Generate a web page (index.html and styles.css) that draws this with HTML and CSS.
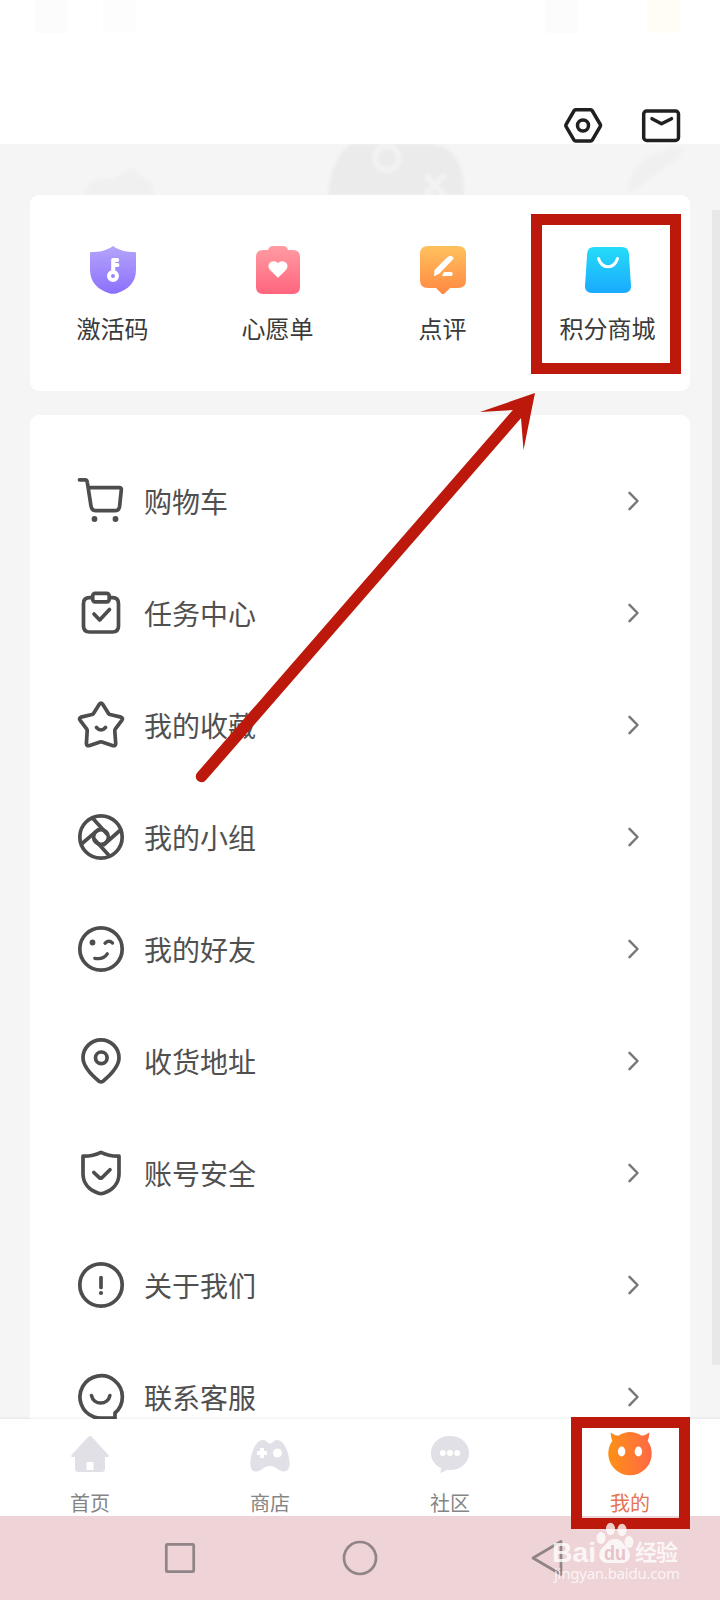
FILE: index.html
```html
<!DOCTYPE html>
<html lang="zh-CN">
<head>
<meta charset="utf-8">
<title>我的</title>
<link rel="stylesheet" href="styles.css">
</head>
<body>
<div class="screen">
  <header class="header">
    <i class="ghost g1"></i><i class="ghost g2"></i><i class="ghost g3"></i><i class="ghost g4"></i>
    <svg class="head-icon" viewBox="0 0 40 40"><path d="M12.500 3.700h15.300a1.500 1.500 0 0 1 1.300.8l8.200 14a1.800 1.800 0 0 1 0 1.800l-8.200 14a1.500 1.500 0 0 1-1.300.8H12.500a1.500 1.500 0 0 1-1.300-.8L3 20.300a1.800 1.800 0 0 1 0-1.800l8.200-14a1.500 1.500 0 0 1 1.300-.8z"/><circle cx="20" cy="19.500" r="5.500"/></svg>
    <svg class="head-icon" viewBox="0 0 40 40"><rect x="2.700" y="5" width="34.800" height="29.500" rx="3"/><path d="M11 12.700l9.500 5 10-5"/></svg>
  </header>
  <main class="content">
    <svg class="backdrop" viewBox="0 0 720 51">
      <path class="dark" d="M328 51C331 25 338 7 352 0h78c20 2 34 12 34 51z"/>
      <circle class="ring" cx="387" cy="14" r="12"/>
      <path class="ring" d="M425 31l20 20M445 31l-20 20"/>
      <path class="soft" d="M84 51c3-10 9-16 16-16h13l18-11 13 10c7 3 10 10 10 17z"/>
      <path class="soft" d="M628 51c0-26 15-43 55-48-2 15-22 21-55 48z"/>
    </svg>
    <section class="shortcuts">
      <div class="shortcut">
        <svg viewBox="0 0 52 52"><defs><linearGradient id="purple" x2="0" y2="1"><stop stop-color="#b5a4fb"/><stop offset="1" stop-color="#8b70fc"/></linearGradient></defs><path fill="url(#purple)" d="M26 2c7 5 14 6 22 6a1 1 0 0 1 1 1v17c0 13-9 20-19 23.200q-4 1.300-8 0C12 46 3 39 3 26V9a1 1 0 0 1 1-1c8 0 15-1 22-6z"/><path d="M26.200 27V16h4M27 21h3.500" stroke="#fff" stroke-width="4" stroke-linecap="round" stroke-linejoin="round" fill="none"/><circle cx="26" cy="32" r="4" stroke="#fff" stroke-width="4" fill="none"/></svg>
        <span>激活码</span>
      </div>
      <div class="shortcut">
        <svg viewBox="0 0 52 52"><defs><linearGradient id="pink" x2="0" y2="1"><stop stop-color="#ff9ca1"/><stop offset="1" stop-color="#ff657d"/></linearGradient></defs><path fill="url(#pink)" d="M16 6q1-4 5-4h10q4 0 5 4h5q7 0 7 7v30q0 7-7 7H11q-7 0-7-7V13q0-7 7-7z"/><path fill="#fff" d="M26 33.800l-7.500-7.300c-6-6 2.500-12.500 7.500-7.200 5-5.300 13.500 1.200 7.500 7.200z"/></svg>
        <span>心愿单</span>
      </div>
      <div class="shortcut">
        <svg viewBox="0 0 52 52"><defs><linearGradient id="orange" x2="0" y2="1"><stop stop-color="#ffc15e"/><stop offset="1" stop-color="#ff8842"/></linearGradient></defs><path fill="url(#orange)" d="M11 2h30q8 0 8 8v26q0 8-8 8h-8l-5.500 5.500q-1.500 1-3 0L19 44h-8q-8 0-8-8V10q0-8 8-8z"/><path fill="#fff" d="M30 13.500q4.500-4 6.800 1L22.500 29.500l-5.500 2.700L17.500 26zM27 28h7.500q2.500 2 0 4H25z"/></svg>
        <span>点评</span>
      </div>
      <div class="shortcut">
        <svg viewBox="0 0 52 52"><defs><linearGradient id="blue" x2="0" y2="1"><stop stop-color="#24dcf8"/><stop offset="1" stop-color="#1baaff"/></linearGradient></defs><path fill="url(#blue)" d="M12 3h28q6 0 6.800 6l2.200 33q.300 7-7 7H10q-7.300 0-7-7L5.200 9Q6 3 12 3z"/><path d="M16.500 14.500c3.500 11 15.500 11 19 0" fill="none" stroke="#fff" stroke-width="3" stroke-linecap="round"/></svg>
        <span>积分商城</span>
      </div>
    </section>
    <section class="menu">
      <div class="row"><svg class="row-icon" viewBox="0 0 48 48"><path d="M2.500 2.800h5.500q2 0 2.300 2.500l3.700 23.700q.800 4.700 5 4.700h19q4 0 4.600-4.500l1.700-16.200q.300-2.300-2-2.300H11.500"/><circle class="fill" cx="17.500" cy="42" r="2.900"/><circle class="fill" cx="38.500" cy="42" r="2.900"/></svg><span>购物车</span><svg class="chev" viewBox="0 0 12 20"><path d="M1.500 1.800l8 8.200-8 8.200"/></svg></div>
      <div class="row"><svg class="row-icon" viewBox="0 0 48 48"><path d="M15 8.700h-2.500q-6 0-6 6V37q0 6 6 6h23q6 0 6-6V14.700q0-6-6-6H33"/><rect x="15.700" y="4.300" width="16.500" height="8.500" rx="2.500"/><path d="M17 25l5.700 6 9.800-10.500"/></svg><span>任务中心</span><svg class="chev" viewBox="0 0 12 20"><path d="M1.500 1.800l8 8.200-8 8.200"/></svg></div>
      <div class="row"><svg class="row-icon" viewBox="0 0 48 48"><path d="M22.300 3.200q1.700-2 3.400 0l5.800 9.300q.500.800 1.500 1l11 2.600q2.300 1 1 3l-6.600 8.700q-.700 1-.600 2.200l.9 12.400q-.1 2.700-2.600 2.300L25 41q-1-.300-2 0l-11 3.700q-2.500.400-2.600-2.300l.8-12.400q.1-1.200-.6-2.200L3 19.100q-1.300-2 1-3L15 13.500q1-.200 1.500-1z"/><path d="M19.500 26.500q4.500 5 9 0"/></svg><span>我的收藏</span><svg class="chev" viewBox="0 0 12 20"><path d="M1.500 1.800l8 8.200-8 8.200"/></svg></div>
      <div class="row"><svg class="row-icon" viewBox="0 0 48 48"><circle cx="24" cy="24" r="21.200"/><circle cx="24" cy="24" r="7.400"/><path d="M15.500 5l14.500 16M43.500 17L27 31.500M32.500 43L17.500 26.500M4.500 31L21 16.800"/></svg><span>我的小组</span><svg class="chev" viewBox="0 0 12 20"><path d="M1.500 1.800l8 8.200-8 8.200"/></svg></div>
      <div class="row"><svg class="row-icon" viewBox="0 0 48 48"><circle cx="24" cy="24" r="21.200"/><circle class="fill" cx="15.500" cy="17.500" r="2.900"/><path class="fine" d="M28 18.200q4-3.700 7.500-.200M17.800 33.300q8.500 1.500 12.500-4.500"/></svg><span>我的好友</span><svg class="chev" viewBox="0 0 12 20"><path d="M1.500 1.800l8 8.200-8 8.200"/></svg></div>
      <div class="row"><svg class="row-icon" viewBox="0 0 48 48"><path d="M22 44.200Q6 31 6 20.800a18 18 0 0 1 36 0Q42 31 26 44.200q-2 1.500-4 0z"/><circle cx="24.300" cy="20.800" r="5.800"/></svg><span>收货地址</span><svg class="chev" viewBox="0 0 12 20"><path d="M1.500 1.800l8 8.200-8 8.200"/></svg></div>
      <div class="row"><svg class="row-icon" viewBox="0 0 48 48"><path d="M24 3.300q8 4 18 3.800v17.700C42 34 36 41 26.500 44.200q-2.500.800-5 0C12 41 6 34 6 24.800V7.100q10 .2 18-3.800z"/><path d="M16.800 23.500l5.500 5.200q1.300 1 2.600 0l8.100-8"/></svg><span>账号安全</span><svg class="chev" viewBox="0 0 12 20"><path d="M1.500 1.800l8 8.200-8 8.200"/></svg></div>
      <div class="row"><svg class="row-icon" viewBox="0 0 48 48"><circle cx="24" cy="24" r="21.200"/><path d="M24 16.500v10"/><circle class="fill" cx="24" cy="32" r="2.100"/></svg><span>关于我们</span><svg class="chev" viewBox="0 0 12 20"><path d="M1.500 1.800l8 8.200-8 8.200"/></svg></div>
      <div class="row"><svg class="row-icon" viewBox="0 0 48 48"><path d="M38 43.500v-3.500a21.200 21.200 0 1 0-21 3.900q3 1.100 7 1.100h14z"/><path d="M14.500 22.500c2 10 16.400 10 18.400 0"/></svg><span>联系客服</span><svg class="chev" viewBox="0 0 12 20"><path d="M1.500 1.800l8 8.200-8 8.200"/></svg></div>
    </section>
    <i class="scrollbar"></i>
  </main>
  <nav class="tabs">
    <div class="tab"><svg viewBox="0 0 48 48"><path d="M22.500 6.500q1.500-1 3 0l17 18.500q1 2-1.200 2H39v11.500q0 3.500-3.500 3.500h-23Q9 42 9 38.500V27H6.500q-2 0-1-2z"/><path fill="#fff" d="M20.500 32h7v8h-7z"/></svg><span>首页</span></div>
    <div class="tab"><svg viewBox="0 0 48 48"><path d="M17 10c4 0 4 3.500 7 3.500s3-3.500 7-3.500c7 0 12 12 12.700 23 .5 8-5 9-7.200 8.500C31 40 30 36 24 36s-7 4-12.500 5.500C8.500 42 4 41 4.300 33 5 22 10 10 17 10z"/><path d="M16 18v10M11 23h10" stroke="#fff" stroke-width="4"/><circle cx="31.500" cy="23" r="4.500" fill="#fff"/></svg><span>商店</span></div>
    <div class="tab"><svg viewBox="0 0 48 48"><path d="M24 6c11 0 19 7.500 19 17s-8 17-19 17q-1 0-3-.2-3 2.200-6 3-1.500 0-.5-1.500l.8-3.100C8.500 35 5 30 5 23 5 13.500 13 6 24 6z"/><g fill="#fff"><circle cx="16.800" cy="23" r="3"/><circle cx="24" cy="23" r="3"/><circle cx="31.200" cy="23" r="3"/></g></svg><span>社区</span></div>
    <div class="tab active"><svg viewBox="0 0 48 48"><defs><linearGradient id="face"><stop stop-color="#ff9015"/><stop offset="1" stop-color="#fe6945"/></linearGradient></defs><path fill="url(#face)" d="M4.800 2.500q3 2.700 7.500 3.200 11.700-7.500 23.400 0Q40 5.200 43.200 2.500q.300 4.500-1.500 8.500a21.700 21.700 0 1 1-35.400 0Q4.500 7 4.800 2.500z"/><ellipse cx="15.600" cy="21.500" rx="3.700" ry="4.900" fill="#fff"/><ellipse cx="32.400" cy="21.500" rx="3.700" ry="4.900" fill="#fff"/></svg><span>我的</span></div>
  </nav>
  <footer class="system-bar">
    <svg viewBox="0 0 40 40"><rect x="6.300" y="6.300" width="27.400" height="27.400" rx="1"/></svg>
    <svg viewBox="0 0 40 40"><circle cx="20" cy="20" r="16"/></svg>
    <svg viewBox="0 0 40 40"><path d="M13 20L41 3.500v33z"/></svg>
  </footer>
  <i class="mark mark-shop"></i>
  <i class="mark mark-mine"></i>
  <svg class="overlay" viewBox="0 0 720 1600">
    <path d="M201.500 776.500L517 414" stroke="#bc180b" stroke-width="11.500" stroke-linecap="round"/>
    <path d="M535 393l-55 19 33-2 8 8 2.500 32z" fill="#bc180b"/>
    <g class="watermark">
      <text x="552" y="1562" class="wm-brand" textLength="44" lengthAdjust="spacingAndGlyphs">Bai</text>
      <ellipse cx="601" cy="1538" rx="4.500" ry="6"/><ellipse cx="610.500" cy="1529" rx="4.500" ry="6.200"/><ellipse cx="622" cy="1530" rx="4.500" ry="6.200"/><ellipse cx="629" cy="1542" rx="4.500" ry="6"/>
      <path d="M615 1539c7 0 8 5 12 9 5 5 4 15-5 15h-15c-8 0-10-10-5-15 5-4 6-9 13-9z"/>
      <text x="604" y="1560" class="wm-du" textLength="22" lengthAdjust="spacingAndGlyphs">du</text>
      <text x="635" y="1560" class="wm-cn" textLength="43">经验</text>
      <text x="554" y="1579" class="wm-url" textLength="126">jingyan.baidu.com</text>
    </g>
  </svg>
</div>
</body>
</html>
```
FILE: styles.css
```css
* { box-sizing: border-box; }
body { margin: 0; font-family: "Noto Sans CJK SC", sans-serif; }
.screen { position: relative; width: 720px; height: 1600px; overflow: hidden; display: flex; flex-direction: column; background: #fff; }
.header { position: relative; flex: none; height: 144px; padding: 0 38px 0 0; display: flex; justify-content: flex-end; align-items: flex-end; gap: 38px; }
.head-icon { width: 40px; height: 40px; margin-bottom: -2px; fill: none; stroke: #202020; stroke-width: 3.5; stroke-linecap: round; stroke-linejoin: round; }
.head-icon:last-child { margin-right: 1px; }
.ghost { position: absolute; top: 0; width: 33px; height: 33px; background: #fcfcfc; }
.g1 { left: 35px; }
.g2 { left: 103px; background: #fdfdfd; }
.g3 { left: 545px; }
.g4 { left: 647px; background: #fffdf6; }
.content { position: relative; flex: none; height: 1275px; padding: 51px 30px 0; overflow: hidden; background: #f5f5f5; display: flex; flex-direction: column; gap: 24px; }
.backdrop { position: absolute; top: 0; left: 0; width: 720px; height: 51px; filter: blur(1.5px); }
.dark { fill: #ebebeb; }
.soft { fill: #f0f0f0; }
.ring { fill: none; stroke: #f2f2f2; stroke-width: 6; }
.shortcuts { position: relative; flex: none; height: 196px; border-radius: 9px; background: #fff; display: grid; grid-template-columns: repeat(4, 1fr); padding-top: 49px; }
.shortcut { display: flex; flex-direction: column; align-items: center; gap: 14px; font-size: 24px; line-height: 36px; color: #3a3a3a; }
.shortcut svg { width: 52px; height: 52px; }
.menu { flex: none; background: #fff; border-radius: 9px 9px 0 0; padding: 30px 50px 0 47px; }
.row { height: 112px; display: flex; align-items: center; font-size: 28px; line-height: 40px; color: #505050; }
.row-icon { width: 48px; height: 48px; margin-right: 19px; fill: none; stroke: #4d4d4d; stroke-width: 3.7; stroke-linecap: round; stroke-linejoin: round; }
.row-icon .fill { fill: #4d4d4d; stroke: none; }
.row-icon .fine { stroke-width: 3.3; }
.chev { width: 12px; height: 20px; margin-left: auto; fill: none; stroke: #777; stroke-width: 2.4; stroke-linecap: round; stroke-linejoin: round; }
.scrollbar { position: absolute; top: 66px; right: 0; width: 8px; height: 1155px; background: #e8e8e8; }
.tabs { position: relative; flex: none; height: 97px; background: #fff; box-shadow: 0 -1px 2px rgba(0,0,0,.07); display: grid; grid-template-columns: repeat(4, 1fr); }
.tab { display: flex; flex-direction: column; align-items: center; gap: 11px; padding-top: 11px; font-size: 20px; line-height: 28px; color: #858585; }
.tab svg { width: 48px; height: 48px; fill: #e1e0e7; flex: none; }
.active { color: #e57450; }
.system-bar { flex: none; height: 84px; background: #eed3d7; display: flex; justify-content: center; align-items: center; gap: 140px; }
.system-bar svg { width: 40px; height: 40px; fill: none; stroke: #908486; stroke-width: 2.7; stroke-linejoin: round; overflow: visible; }
.mark { position: absolute; border: 11px solid #bc180b; }
.mark-shop { left: 531px; top: 214px; width: 150px; height: 160px; }
.mark-mine { left: 571px; top: 1417px; width: 119px; height: 112px; }
.overlay { position: absolute; left: 0; top: 0; width: 720px; height: 1600px; }
.watermark { fill: #fff; fill-opacity: .78; }
.wm-brand { font: bold 28px "Liberation Sans", sans-serif; }
.wm-du { font: bold 20px "Liberation Sans", sans-serif; fill: #e6c3c8; fill-opacity: 1; }
.wm-cn { font: bold 22px "Noto Sans CJK SC", sans-serif; }
.wm-url { font: 15px "Noto Sans", sans-serif; }
```
